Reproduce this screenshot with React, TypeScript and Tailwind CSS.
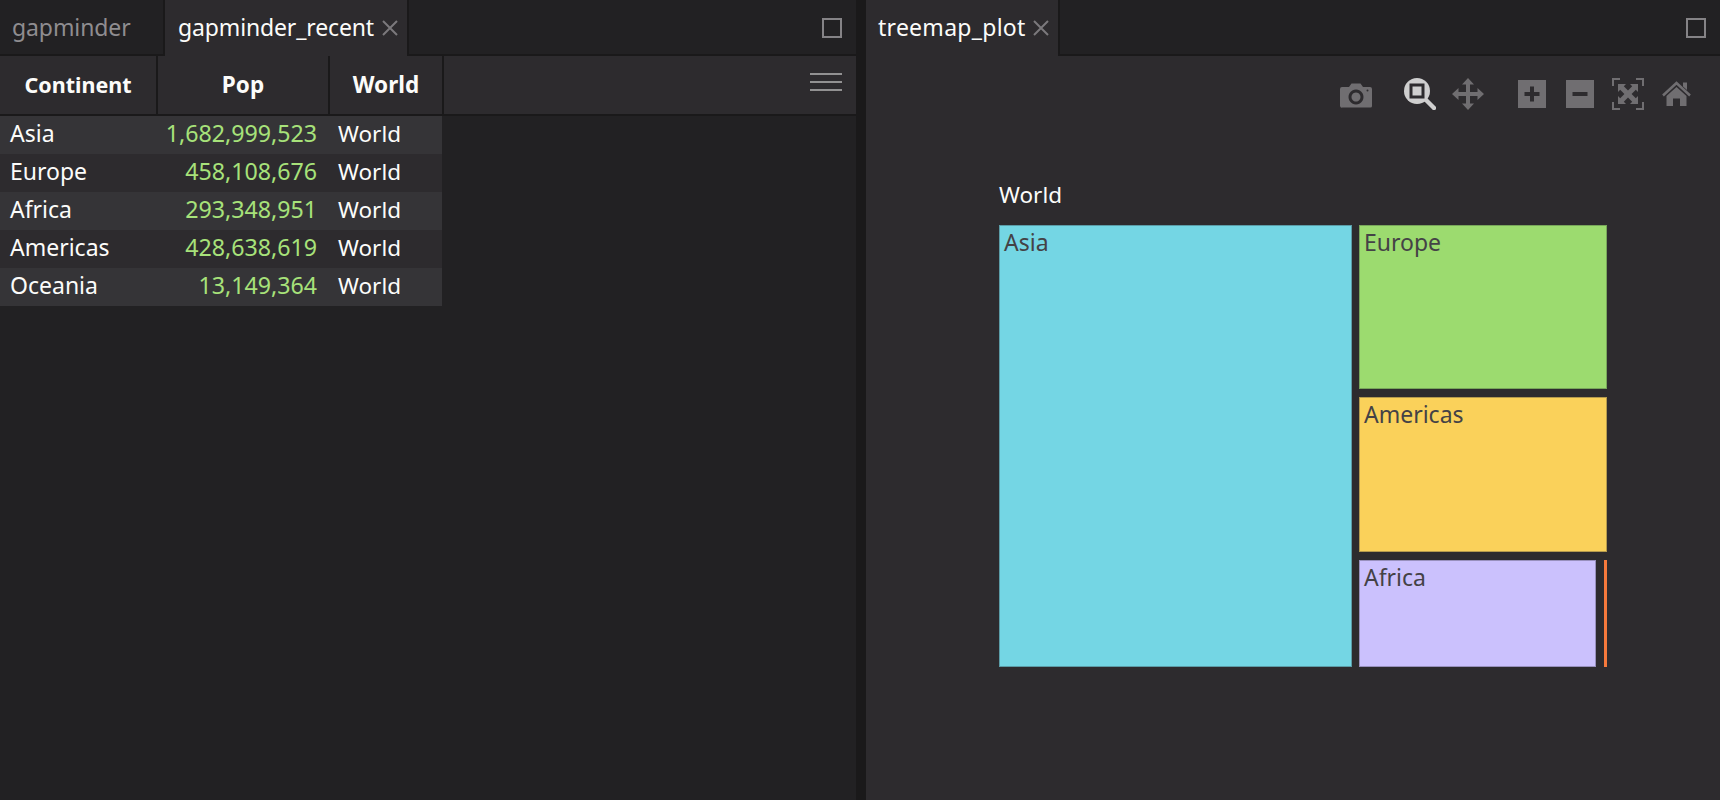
import React from "react";

const font = { fontFamily: '"Noto Sans", sans-serif' };
const rows = [
  ["Asia", "1,682,999,523"],
  ["Europe", "458,108,676"],
  ["Africa", "293,348,951"],
  ["Americas", "428,638,619"],
  ["Oceania", "13,149,364"],
];

function CloseX() {
  return (
    <svg width="16" height="16" viewBox="0 0 16 16" className="shrink-0">
      <path d="M1 1L15 15M15 1L1 15" stroke="#7b797c" strokeWidth="2" fill="none" />
    </svg>
  );
}
function Maximize() {
  return <div className="w-5 h-5 border-2 border-[#858386]" />;
}
function Tool({ w, children, cls = "" }: { w: number; children: React.ReactNode; cls?: string }) {
  return (
    <svg width={w} height="32" viewBox={`0 0 ${w} 32`} className={"shrink-0 " + cls}>
      {children}
    </svg>
  );
}
const G = "#706e71";

function Toolbar() {
  return (
    <div className="flex items-center justify-end h-8 pr-[29px] mt-[22px]">
      <Tool w={32}>
        <path fillRule="evenodd" fill={G} d="M2 9h7l2.500-3.500h9L23 9h7a2 2 0 0 1 2 2v17a1.500 1.500 0 0 1-1.500 1.500h-28A2 2 0 0 1 0 28V11a2 2 0 0 1 2-2ZM16 11.500a7.500 7.500 0 1 0 .01 0ZM16 14.500a4.500 4.500 0 1 1-.01 0Z" />
        <circle cx="27.500" cy="12.500" r="1" fill="#2d2b2e" />
      </Tool>
      <Tool w={32} cls="ml-[32px]">
        <circle cx="13" cy="13" r="13" fill="#cfcfcf" />
        <path d="M22 22L30 30" stroke="#cfcfcf" strokeWidth="4.500" strokeLinecap="round" />
        <rect x="7" y="7" width="12" height="12" fill="#cfcfcf" stroke="#2d2b2e" strokeWidth="3" />
      </Tool>
      <Tool w={32} cls="ml-[16px]">
        <path fill={G} d="M16 0L22 6.500H18V14H25.500V10L32 16L25.500 22V18H18V25.500H22L16 32L10 25.500H14V18H6.500V22L0 16L6.500 10V14H14V6.500H10Z" />
      </Tool>
      <Tool w={28} cls="ml-[34px]">
        <path fillRule="evenodd" fill={G} d="M0 2H28V30H0ZM12 8.500V14H6.500V18H12V23.500H16V18H21.500V14H16V8.500Z" />
      </Tool>
      <Tool w={28} cls="ml-[20px]">
        <path fillRule="evenodd" fill={G} d="M0 2H28V30H0ZM6.500 14V18H21.500V14Z" />
      </Tool>
      <Tool w={32} cls="ml-[18px]">
        <path fill="none" stroke={G} strokeWidth="2" d="M1 8V1H8M24 1H31V8M31 24V31H24M8 31H1V24" />
        <path fill={G} d="M6 6H14L11.800 8.200L16 12.400L20.200 8.200L18 6H26V14L23.800 11.800L19.600 16L23.800 20.200L26 18V26H18L20.200 23.800L16 19.600L11.800 23.800L14 26H6V18L8.200 20.200L12.400 16L8.200 11.800L6 14Z" />
      </Tool>
      <Tool w={29} cls="ml-[18px]">
        <path fill="none" stroke={G} strokeWidth="2.500" d="M1 17.500L14.500 5L28 17.500" />
        <path fill={G} d="M21 4.500H25V12L21 8.500ZM14.500 9L24.500 18V28H18V20.500H11V28H4.500V18Z" />
      </Tool>
    </div>
  );
}

function Cell({ name, bg, border, cls = "" }: { name?: string; bg: string; border: string; cls?: string }) {
  return (
    <div className={`border pl-1 leading-[33px] text-[23px] text-[#444246] overflow-hidden ${bg} ${border} ${cls}`}>
      {name}
    </div>
  );
}

export default function App() {
  return (
    <div style={font} className="flex w-[1720px] h-[800px] bg-[#1a191a] overflow-hidden text-[22.500px] text-[#fcfcfa]">
      <div className="flex flex-col w-[856px] bg-[#222123]">
        <div className="flex h-[56px] shrink-0 border-b-2 border-[#1a191a] text-[23px]">
          <div className="w-[165px] border-r-2 border-[#1a191a] pl-[12px] pt-[9px] text-[#8f8d90] leading-[36px] tracking-[-0.1px]">gapminder</div>
          <div className="flex items-start w-[244px] -mb-[2px] h-[56px] bg-[#2d2b2e] border-r-2 border-[#1a191a] pl-[13px] pt-[9px] leading-[36px]">
            <span className="w-[204px] whitespace-nowrap tracking-[-0.14px]">gapminder_recent</span>
            <span className="mt-[11px]"><CloseX /></span>
          </div>
          <div className="flex-1 flex justify-end pr-[14px] pt-[18px]"><Maximize /></div>
        </div>
        <div className="flex h-[60px] shrink-0 bg-[#2d2b2e] border-b-2 border-[#1a191a] font-bold">
          <div className="w-[158px] border-r-2 border-[#1a191a] text-center leading-[57px] text-[21.500px]">Continent</div>
          <div className="w-[172px] border-r-2 border-[#1a191a] text-center leading-[57px]">Pop</div>
          <div className="w-[114px] border-r-2 border-[#1a191a] text-center leading-[57px]">World</div>
          <div className="ml-auto mr-[14px] mt-[17px] flex flex-col gap-[6px] w-[32px]">
            <div className="h-[2px] bg-[#929192]" />
            <div className="h-[2px] bg-[#929192]" />
            <div className="h-[2px] bg-[#929192]" />
          </div>
        </div>
        <div className="w-[442px]">
          {rows.map((r, i) => (
            <div key={r[0]} className={`flex h-[38px] leading-[34px] ${i % 2 === 0 ? "bg-[#353437]" : "bg-[#2d2b2e]"}`}>
              <div className="w-[158px] pl-[10px] text-[23px]">{r[0]}</div>
              <div className="w-[159px] text-[#a7e27a] whitespace-nowrap text-[23.200px] flex justify-end">{r[1]}</div>
              <div className="pl-[21px] leading-[36px]">World</div>
            </div>
          ))}
        </div>
      </div>
      <div className="flex flex-col w-[854px] ml-[10px] bg-[#2d2b2e]">
        <div className="flex h-[56px] shrink-0 bg-[#222123] border-b-2 border-[#1a191a] text-[23px]">
          <div className="flex items-start w-[194px] h-[56px] -mb-[2px] bg-[#2d2b2e] border-r-2 border-[#1a191a] pl-[12px] pt-[9px] leading-[36px]">
            <span className="w-[155px] whitespace-nowrap tracking-[0.27px]">treemap_plot</span>
            <span className="mt-[11px]"><CloseX /></span>
          </div>
          <div className="flex-1 flex justify-end pr-[14px] pt-[18px]"><Maximize /></div>
        </div>
        <Toolbar />
        <div className="ml-[133px] mt-[67px] h-[36px] leading-[36px]">World</div>
        <div className="ml-[133px] mt-[12px] flex gap-[7px] h-[442px] w-[608px]">
          <Cell name="Asia" bg="bg-[#74d6e4]" border="border-[#5b9ca7]" cls="w-[353px]" />
          <div className="w-[248px] flex flex-col gap-[8px]">
            <Cell name="Europe" bg="bg-[#9cdb6f]" border="border-[#78a65a]" cls="h-[164px]" />
            <Cell name="Americas" bg="bg-[#fad15a]" border="border-[#b59a4d]" cls="h-[155px]" />
            <div className="flex gap-[8px] flex-1">
              <Cell name="Africa" bg="bg-[#cbc1fd]" border="border-[#9890bd]" cls="w-[237px]" />
              <div className="w-[3px] bg-[#f6793c]" />
            </div>
          </div>
        </div>
      </div>
    </div>
  );
}
